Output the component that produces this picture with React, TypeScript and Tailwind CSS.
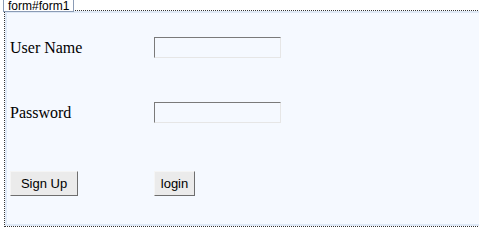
export default function App() {
  return (
    <div className="relative h-[231px] w-[479px] overflow-hidden bg-white">
      {/* tag label */}
      <div
        className="absolute left-[3px] top-0 z-10 border border-t-0 border-[#8a9bb5] bg-white px-[4px] pt-[1px] text-[12px] leading-[10px] text-black"
        style={{ fontFamily: '"Liberation Sans", Arial, sans-serif' }}
      >
        form#form1
      </div>

      {/* dotted form outline */}
      <div className="ml-[4px] mt-[10px] h-[217px] w-[490px] border border-dotted border-[#333]">
        <div className="h-full border-2 border-[#dfe9f6] bg-[#f5f9ff] pl-[3px]">
          <div
            className="flex flex-col"
            style={{ fontFamily: '"Liberation Serif", "Times New Roman", serif' }}
          >
            <div className="mt-[24px] flex h-[21px] items-center">
              <label className="w-[144px] text-[16px] text-black">User Name</label>
              <input className="h-[21px] w-[127px] border border-t-[#7a7a7a] border-l-[#7a7a7a] border-r-[#e6e6e6] border-b-[#e6e6e6] bg-[#f5f9ff] outline-none" />
            </div>
            <div className="mt-[44px] flex h-[21px] items-center">
              <label className="w-[144px] text-[16px] text-black">Password</label>
              <input
                type="password"
                className="h-[21px] w-[127px] border border-t-[#7a7a7a] border-l-[#7a7a7a] border-r-[#e6e6e6] border-b-[#e6e6e6] bg-[#f5f9ff] outline-none"
              />
            </div>
            <div
              className="mt-[48px] flex h-[25px] items-center text-[13px] text-black"
              style={{ fontFamily: '"Liberation Sans", Arial, sans-serif' }}
            >
              <div className="w-[144px]">
                <button className="h-[25px] w-[68px] border border-t-[#f5f5f5] border-l-[#f5f5f5] border-r-[#6e6e6e] border-b-[#6e6e6e] bg-[#ebebeb]">
                  Sign Up
                </button>
              </div>
              <button className="h-[25px] w-[41px] border border-t-[#f5f5f5] border-l-[#f5f5f5] border-r-[#6e6e6e] border-b-[#6e6e6e] bg-[#ebebeb]">
                login
              </button>
            </div>
          </div>
        </div>
      </div>
    </div>
  );
}
